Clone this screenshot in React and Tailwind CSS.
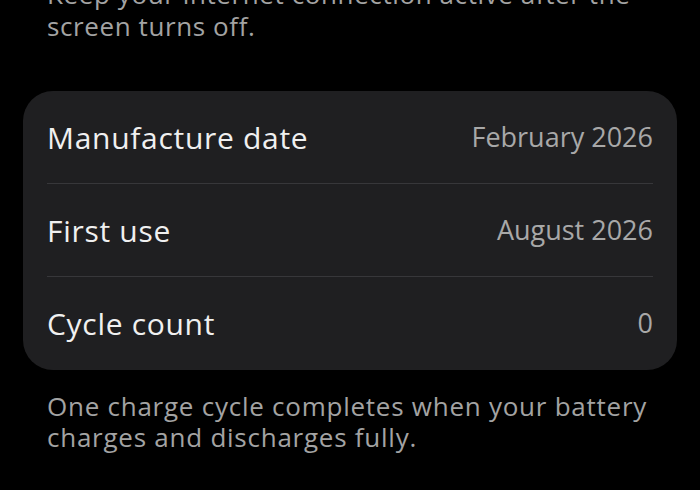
export default function App() {
  const rows = [
    ["Manufacture date", "February 2026"],
    ["First use", "August 2026"],
    ["Cycle count", "0"],
  ];
  return (
    <div className="w-[700px] h-[490px] bg-black overflow-hidden" style={{ fontFamily: "'Open Sans', 'Noto Sans', sans-serif" }}>
      <div className="mt-[-22px] px-[47px] text-[26px] tracking-[0.6px] leading-[32px] text-[#a3a3a3]">
        Keep your internet connection active after the screen turns off.
      </div>
      <div className="mx-[23px] mt-[49px] rounded-[30px] bg-[#1f1f21] px-[24px]">
        {rows.map(([l, v], i) => (
          <div key={l} className={"flex items-center justify-between h-[93px] " + (i < 2 ? "border-b border-[#37373a]" : "")}>
            <span className="text-[30px] tracking-[0.7px] text-[#f0f0f0]">{l}</span>
            <span className="text-[27px] text-[#a8a8a8]">{v}</span>
          </div>
        ))}
      </div>
      <div className="mt-[21px] px-[47px] text-[26px] tracking-[0.75px] leading-[31px] text-[#a3a3a3]">
        One charge cycle completes when your battery charges and discharges fully.
      </div>
    </div>
  );
}
